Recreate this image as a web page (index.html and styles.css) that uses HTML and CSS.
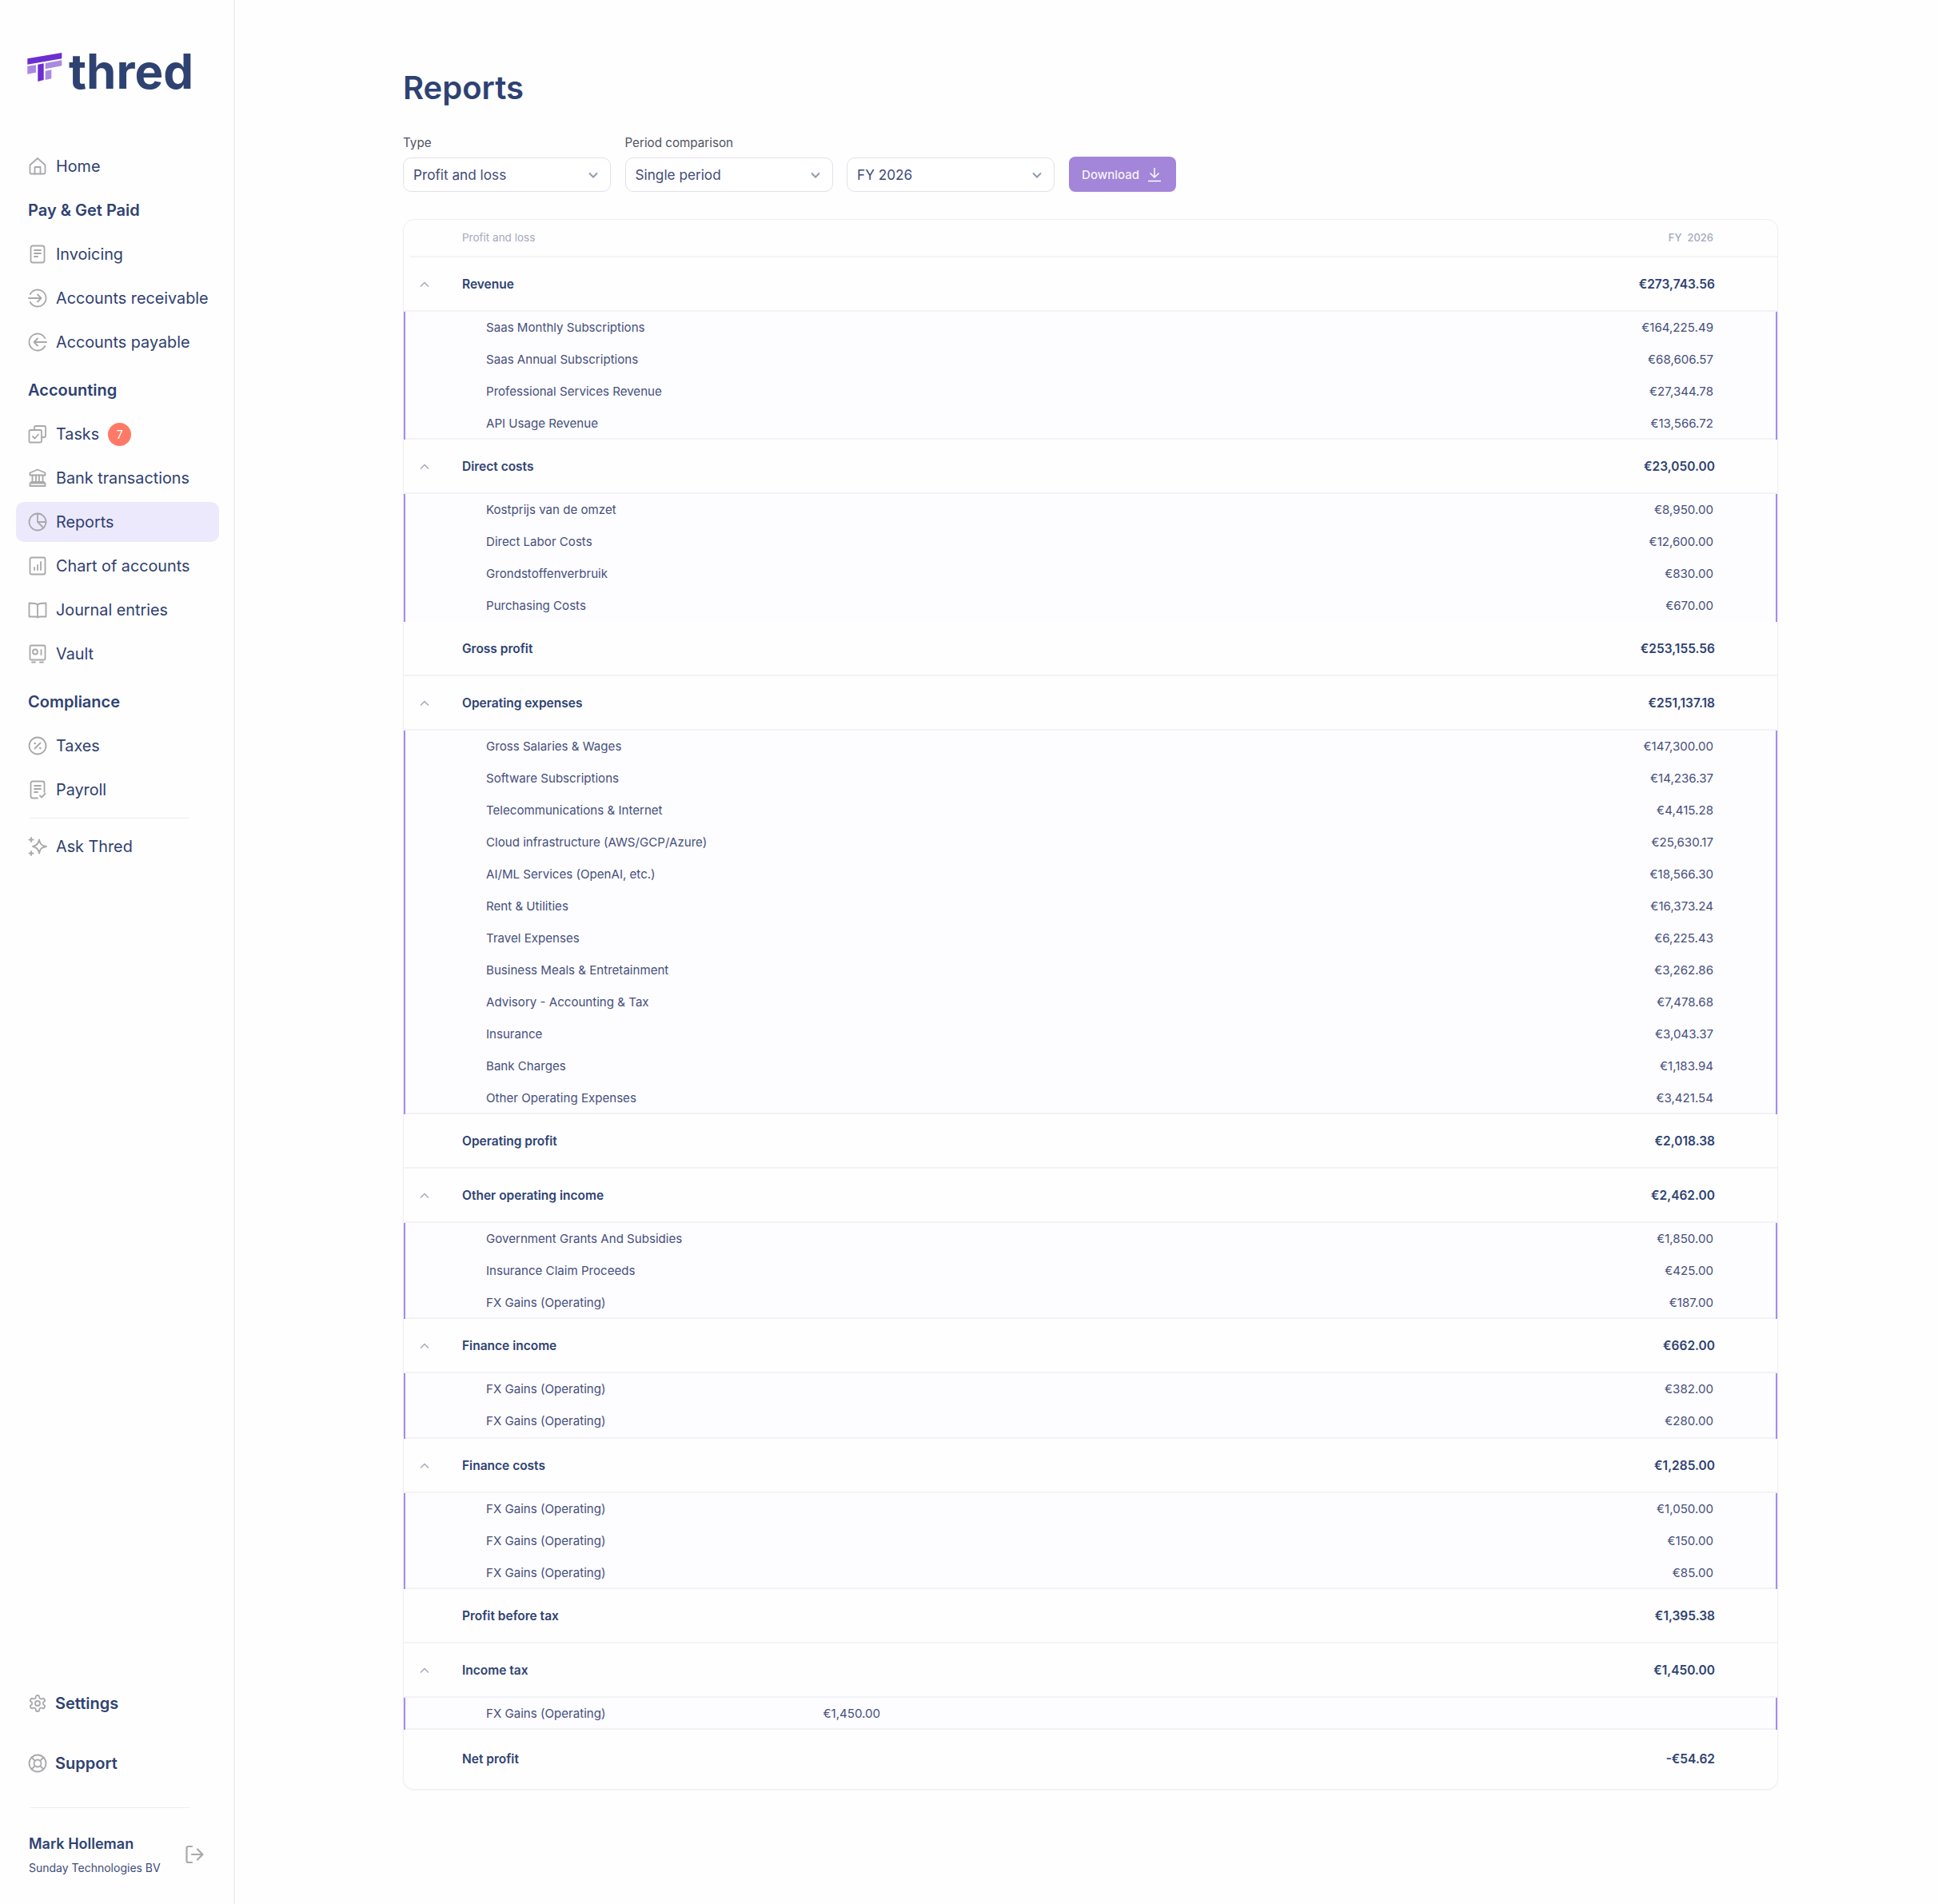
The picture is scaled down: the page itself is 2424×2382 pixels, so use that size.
FILE: index.html
```html
<!DOCTYPE html>
<html lang="en">
<head>
    <meta charset="UTF-8">
    <title>Reports</title>
    <link rel="stylesheet" href="styles.css">
</head>
<body>
    <aside class="sidebar">
        <div class="logo">
            <svg class="logo-mark" viewBox="0 0 44 38" xmlns="http://www.w3.org/2000/svg">
                <polygon class="mark-dark" points="0.3,8.3 43.3,1 43.3,8.3 0.3,15.7"/>
                <polygon class="mark-light" points="0.3,17.7 11,16.3 11,25.7 0.3,27.7"/>
                <polygon class="mark-dark" points="13.3,15.7 20.7,14.3 20.7,35 13.3,37"/>
                <polygon class="mark-light" points="22.7,14 43.3,10.3 43.3,17.3 22.7,21.3"/>
                <polygon class="mark-light" points="22.7,23.7 30.3,22.3 30.3,33.3 22.7,35"/>
            </svg>
            <span class="logo-text">thred</span>
        </div>

        <nav class="nav">
            <a class="nav-item">
                <svg class="nav-icon" viewBox="0 0 24 24"><path d="M2.500 10.500 12 2l9.500 8.500V20a1.500 1.500 0 0 1-1.500 1.500H4A1.500 1.500 0 0 1 2.500 20z"/><path d="M8.500 21.500V13h7v8.500"/></svg>
                Home
            </a>
            <div class="nav-title">Pay &amp; Get Paid</div>
            <a class="nav-item">
                <svg class="nav-icon" viewBox="0 0 24 24"><rect x="3.500" y="1.500" width="17" height="21" rx="2.500"/><path d="M8 7h8M8 11h8M8 15h4"/></svg>
                Invoicing
            </a>
            <a class="nav-item">
                <svg class="nav-icon" viewBox="0 0 24 24"><path d="M2.800 7a10.500 10.500 0 1 1 0 10"/><path d="M1 12h15.500M12 7.500l4.500 4.500-4.500 4.500"/></svg>
                Accounts receivable
            </a>
            <a class="nav-item">
                <svg class="nav-icon" viewBox="0 0 24 24"><path d="M21.200 7a10.500 10.500 0 1 0 0 10"/><path d="M23 12H7.500M12 7.500 7.500 12l4.500 4.500"/></svg>
                Accounts payable
            </a>

            <div class="nav-title nav-title-gap">Accounting</div>
            <a class="nav-item">
                <svg class="nav-icon" viewBox="0 0 24 24"><path d="M8 6.500V3.500A1.500 1.500 0 0 1 9.500 2h11A1.500 1.500 0 0 1 22 3.500v11a1.500 1.500 0 0 1-1.500 1.500H17"/><rect x="1.500" y="7" width="15.500" height="15.500" rx="1.500"/><path d="m6 15 2.500 2.500L13 12.500"/></svg>
                Tasks
                <span class="badge">7</span>
            </a>
            <a class="nav-item">
                <svg class="nav-icon" viewBox="0 0 24 24"><path d="M12 1.500 2.500 5.500V8.500h19V5.500z"/><path d="M5.500 8.500V17M10 8.500V17M14 8.500V17M18.500 8.500V17M4 17h16M2.500 22h19v-3.500h-19z"/></svg>
                Bank transactions
            </a>
            <a class="nav-item active">
                <svg class="nav-icon" viewBox="0 0 24 24"><circle cx="12" cy="12" r="10.500"/><path d="M12 1.500V12l7.500 7.500M12 12h10.500"/></svg>
                Reports
            </a>
            <a class="nav-item">
                <svg class="nav-icon" viewBox="0 0 24 24"><rect x="2.500" y="1.500" width="19" height="21" rx="2"/><path d="M8 17v-3M12 17v-6M16 17V7"/></svg>
                Chart of accounts
            </a>
            <a class="nav-item">
                <svg class="nav-icon" viewBox="0 0 24 24"><path d="M12 5.500C10.500 4 8 3.500 1.500 3.500V20.500h7.500c1.500 0 3 .5 3 1 0-.5 1.500-1 3-1h7.500V3.500c-6.500 0-9 .5-10.500 2zM12 5.500v16"/></svg>
                Journal entries
            </a>
            <a class="nav-item">
                <svg class="nav-icon" viewBox="0 0 24 24"><rect x="2.500" y="1.500" width="19" height="18" rx="1.500"/><circle cx="9" cy="9.500" r="3"/><path d="M16.500 7v6M5 22.500h4M15 22.500h4"/></svg>
                Vault
            </a>

            <div class="nav-title nav-title-gap">Compliance</div>
            <a class="nav-item">
                <svg class="nav-icon" viewBox="0 0 24 24"><circle cx="12" cy="12" r="10.500"/><path d="m8.500 15.500 7-7"/><path class="icon-dot" d="M8.700 9h.01M15.300 15h.01"/></svg>
                Taxes
            </a>
            <a class="nav-item">
                <svg class="nav-icon" viewBox="0 0 24 24"><path d="M12 22.500H6A2.500 2.500 0 0 1 3.500 20V4A2.500 2.500 0 0 1 6 1.500h12A2.500 2.500 0 0 1 20.500 4v11"/><path d="M8 7h8M8 11h8M8 15h4M15 19.500l2 2 4.500-4.500"/></svg>
                Payroll
            </a>
            <div class="nav-divider"></div>
            <a class="nav-item">
                <svg class="nav-icon" viewBox="0 0 24 24"><path d="M14 3.500c.8 5.300 3 7.500 9 8.500-6 1-8.200 3.200-9 8.500-.8-5.300-3-7.500-8-8.500 5-1 7.200-3.200 8-8.500z"/><path d="M4 1v5M1.500 3.500h5M4 18v5M1.500 20.500h5"/></svg>
                Ask Thred
            </a>
        </nav>

        <div class="sidebar-bottom">
            <a class="nav-item nav-strong">
                <svg class="nav-icon" viewBox="0 0 24 24"><path d="M12.220 2h-.44a2 2 0 0 0-2 2v.18a2 2 0 0 1-1 1.730l-.43.25a2 2 0 0 1-2 0l-.15-.08a2 2 0 0 0-2.730.73l-.22.38a2 2 0 0 0 .73 2.730l.15.1a2 2 0 0 1 1 1.720v.51a2 2 0 0 1-1 1.740l-.15.09a2 2 0 0 0-.73 2.730l.22.38a2 2 0 0 0 2.730.73l.15-.08a2 2 0 0 1 2 0l.43.25a2 2 0 0 1 1 1.730V20a2 2 0 0 0 2 2h.44a2 2 0 0 0 2-2v-.18a2 2 0 0 1 1-1.730l.43-.25a2 2 0 0 1 2 0l.15.08a2 2 0 0 0 2.730-.73l.22-.39a2 2 0 0 0-.73-2.730l-.15-.08a2 2 0 0 1-1-1.740v-.5a2 2 0 0 1 1-1.740l.15-.09a2 2 0 0 0 .73-2.730l-.22-.38a2 2 0 0 0-2.730-.73l-.15.08a2 2 0 0 1-2 0l-.43-.25a2 2 0 0 1-1-1.730V4a2 2 0 0 0-2-2z"/><circle cx="12" cy="12" r="3"/></svg>
                Settings
            </a>
            <a class="nav-item nav-strong support-item">
                <svg class="nav-icon" viewBox="0 0 24 24"><circle cx="12" cy="12" r="10.500"/><circle cx="12" cy="12" r="4.500"/><path d="m4.500 4.500 4.300 4.300M19.500 4.500l-4.300 4.300M4.500 19.500l4.300-4.300M19.500 19.500l-4.300-4.300"/></svg>
                Support
            </a>
            <div class="nav-divider bottom-divider"></div>
            <div class="user">
                <div>
                    <div class="user-name">Mark Holleman</div>
                    <div class="user-company">Sunday Technologies BV</div>
                </div>
                <svg class="logout-icon" viewBox="0 0 24 24"><path d="M9 2H4.500A2 2 0 0 0 2.500 4v16a2 2 0 0 0 2 2H9"/><path d="M9 12h13.500M16 5.500l6.500 6.500-6.500 6.500"/></svg>
            </div>
        </div>
    </aside>

    <main class="main">
        <h1>Reports</h1>

        <div class="filters">
            <div class="field">
                <label>Type</label>
                <div class="select">Profit and loss
                    <svg class="select-arrow" viewBox="0 0 12 8"><path d="M1 1.500 6 6.500l5-5"/></svg>
                </div>
            </div>
            <div class="field">
                <label>Period comparison</label>
                <div class="select">Single period
                    <svg class="select-arrow" viewBox="0 0 12 8"><path d="M1 1.500 6 6.500l5-5"/></svg>
                </div>
            </div>
            <div class="field">
                <div class="select">FY 2026
                    <svg class="select-arrow" viewBox="0 0 12 8"><path d="M1 1.500 6 6.500l5-5"/></svg>
                </div>
            </div>
            <button class="download">Download
                <svg class="download-icon" viewBox="0 0 20 20"><path d="M10 2v11.500M4.500 8.500 10 14l5.500-5.500M2 18.500h16"/></svg>
            </button>
        </div>

        <section class="report">
            <div class="report-head"><span>Profit and loss</span><span class="head-period">FY&nbsp; 2026</span></div>

            <div class="row group"><svg class="toggle" viewBox="0 0 12 8"><path d="M1 6.500 6 1.500l5 5"/></svg><span>Revenue</span><span>€273,743.56</span></div>
            <div class="children">
                <div class="row child"><span>Saas Monthly Subscriptions</span><span>€164,225.49</span></div>
                <div class="row child"><span>Saas Annual Subscriptions</span><span>€68,606.57</span></div>
                <div class="row child"><span>Professional Services Revenue</span><span>€27,344.78</span></div>
                <div class="row child"><span>API Usage Revenue</span><span>€13,566.72</span></div>
            </div>

            <div class="row group"><svg class="toggle" viewBox="0 0 12 8"><path d="M1 6.500 6 1.500l5 5"/></svg><span>Direct costs</span><span>€23,050.00</span></div>
            <div class="children no-line">
                <div class="row child"><span>Kostprijs van de omzet</span><span>€8,950.00</span></div>
                <div class="row child"><span>Direct Labor Costs</span><span>€12,600.00</span></div>
                <div class="row child"><span>Grondstoffenverbruik</span><span>€830.00</span></div>
                <div class="row child"><span>Purchasing Costs</span><span>€670.00</span></div>
            </div>

            <div class="row group total"><span>Gross profit</span><span>€253,155.56</span></div>

            <div class="row group"><svg class="toggle" viewBox="0 0 12 8"><path d="M1 6.500 6 1.500l5 5"/></svg><span>Operating expenses</span><span>€251,137.18</span></div>
            <div class="children">
                <div class="row child"><span>Gross Salaries &amp; Wages</span><span>€147,300.00</span></div>
                <div class="row child"><span>Software Subscriptions</span><span>€14,236.37</span></div>
                <div class="row child"><span>Telecommunications &amp; Internet</span><span>€4,415.28</span></div>
                <div class="row child"><span>Cloud infrastructure (AWS/GCP/Azure)</span><span>€25,630.17</span></div>
                <div class="row child"><span>AI/ML Services (OpenAI, etc.)</span><span>€18,566.30</span></div>
                <div class="row child"><span>Rent &amp; Utilities</span><span>€16,373.24</span></div>
                <div class="row child"><span>Travel Expenses</span><span>€6,225.43</span></div>
                <div class="row child"><span>Business Meals &amp; Entretainment</span><span>€3,262.86</span></div>
                <div class="row child"><span>Advisory - Accounting &amp; Tax</span><span>€7,478.68</span></div>
                <div class="row child"><span>Insurance</span><span>€3,043.37</span></div>
                <div class="row child"><span>Bank Charges</span><span>€1,183.94</span></div>
                <div class="row child"><span>Other Operating Expenses</span><span>€3,421.54</span></div>
            </div>

            <div class="row group total"><span>Operating profit</span><span>€2,018.38</span></div>

            <div class="row group"><svg class="toggle" viewBox="0 0 12 8"><path d="M1 6.500 6 1.500l5 5"/></svg><span>Other operating income</span><span>€2,462.00</span></div>
            <div class="children">
                <div class="row child"><span>Government Grants And Subsidies</span><span>€1,850.00</span></div>
                <div class="row child"><span>Insurance Claim Proceeds</span><span>€425.00</span></div>
                <div class="row child"><span>FX Gains (Operating)</span><span>€187.00</span></div>
            </div>

            <div class="row group"><svg class="toggle" viewBox="0 0 12 8"><path d="M1 6.500 6 1.500l5 5"/></svg><span>Finance income</span><span>€662.00</span></div>
            <div class="children children-tall">
                <div class="row child"><span>FX Gains (Operating)</span><span>€382.00</span></div>
                <div class="row child"><span>FX Gains (Operating)</span><span>€280.00</span></div>
            </div>

            <div class="row group"><svg class="toggle" viewBox="0 0 12 8"><path d="M1 6.500 6 1.500l5 5"/></svg><span>Finance costs</span><span>€1,285.00</span></div>
            <div class="children">
                <div class="row child"><span>FX Gains (Operating)</span><span>€1,050.00</span></div>
                <div class="row child"><span>FX Gains (Operating)</span><span>€150.00</span></div>
                <div class="row child"><span>FX Gains (Operating)</span><span>€85.00</span></div>
            </div>

            <div class="row group total"><span>Profit before tax</span><span>€1,395.38</span></div>

            <div class="row group"><svg class="toggle" viewBox="0 0 12 8"><path d="M1 6.500 6 1.500l5 5"/></svg><span>Income tax</span><span>€1,450.00</span></div>
            <div class="children">
                <div class="row child child-left"><span>FX Gains (Operating)</span><span>€1,450.00</span></div>
            </div>

            <div class="row group total net"><span>Net profit</span><span>-€54.62</span></div>
        </section>
    </main>
</body>
</html>
```

FILE: styles.css
```css
* {
    margin: 0;
    padding: 0;
    box-sizing: border-box;
}

body {
    font-family: Inter, 'Noto Sans', sans-serif;
    background-color: #fefefe;
    color: #2f4070;
    display: flex;
    height: 2382px;
    overflow: hidden;
}

/* Sidebar */
.sidebar {
    width: 294px;
    flex-shrink: 0;
    height: 100%;
    border-right: 2px solid #f1f1f3;
    padding: 0 18px 0 20px;
    display: flex;
    flex-direction: column;
}

.logo {
    height: 183px;
    padding: 61px 0 0 14px;
    display: flex;
    align-items: flex-start;
}

.logo-mark {
    width: 44px;
    height: 38px;
    margin-top: 4px;
}

.mark-dark {
    fill: #6b2fd0;
}

.mark-light {
    fill: #a989e3;
}

.logo-text {
    font-size: 60px;
    line-height: 56px;
    font-weight: 700;
    color: #2e4272;
    margin-left: 8px;
}

.nav {
    display: flex;
    flex-direction: column;
    gap: 5px;
}

.nav-item {
    height: 50px;
    display: flex;
    align-items: center;
    gap: 11px;
    padding-left: 15px;
    border-radius: 10px;
    font-size: 19.800px;
    color: #2f4070;
}

.nav-item.active {
    background-color: #ece9fd;
}

.nav-icon {
    width: 24px;
    height: 24px;
    flex-shrink: 0;
    fill: none;
    stroke: #a9a9ac;
    stroke-width: 1.800;
    stroke-linecap: round;
    stroke-linejoin: round;
}

.icon-dot {
    stroke-width: 2.600;
}

.nav-title {
    height: 50px;
    display: flex;
    align-items: center;
    padding-left: 15px;
    font-size: 20px;
    font-weight: 600;
    color: #2e4272;
}

.nav-title-gap {
    margin-top: 5px;
}

.nav-divider {
    height: 1px;
    background-color: #eeeef0;
    margin: 5px 37px 5px 17px;
}

.badge {
    width: 29px;
    height: 29px;
    border-radius: 50%;
    background-color: #ff7a66;
    color: #fff;
    font-size: 14px;
    display: flex;
    align-items: center;
    justify-content: center;
}

.sidebar-bottom {
    margin-top: auto;
    padding-bottom: 30px;
    display: flex;
    flex-direction: column;
}

.nav-strong {
    font-size: 20px;
    font-weight: 600;
    color: #2e4272;
    gap: 10px;
}

.support-item {
    margin-top: 25px;
}

.bottom-divider {
    margin-top: 30px;
    margin-bottom: 30px;
}

.user {
    display: flex;
    align-items: center;
    padding: 0 0 0 16px;
}

.user-name {
    font-size: 18px;
    font-weight: 600;
    line-height: 30px;
    color: #2e4272;
}

.user-company {
    font-size: 14px;
    line-height: 30px;
    color: #3f4c7a;
}

.logout-icon {
    width: 24px;
    height: 24px;
    margin-left: 30px;
    margin-top: -4px;
    fill: none;
    stroke: #a9a9ac;
    stroke-width: 2.200;
    stroke-linecap: round;
    stroke-linejoin: round;
}

/* Main */
.main {
    flex: 1;
    padding: 85px 200px 0 210px;
}

h1 {
    font-size: 40px;
    font-weight: 600;
    line-height: 50px;
    color: #2e4272;
}

.filters {
    display: flex;
    align-items: flex-end;
    gap: 17.500px;
    margin-top: 32px;
}

.field label {
    display: block;
    font-size: 15.200px;
    line-height: 24px;
    margin-bottom: 6px;
    color: #505462;
}

.select {
    width: 260px;
    height: 43px;
    background-color: #fff;
    border: 1.500px solid #e2e1e8;
    border-radius: 10px;
    padding: 0 12px;
    display: flex;
    align-items: center;
    justify-content: space-between;
    font-size: 17.200px;
    color: #3f4c7a;
}

.select-arrow {
    width: 12px;
    height: 8px;
    margin-right: 3px;
    fill: none;
    stroke: #8f9bae;
    stroke-width: 2;
}

.download {
    width: 134px;
    height: 44px;
    border: none;
    border-radius: 8px;
    background-color: #a385d9;
    color: #f6f2fc;
    font-family: inherit;
    font-size: 15px;
    font-weight: 500;
    display: flex;
    align-items: center;
    justify-content: center;
    gap: 9px;
}

.download-icon {
    width: 20px;
    height: 20px;
    fill: none;
    stroke: #fff;
    stroke-width: 1.500;
}

/* Report table */
.report {
    margin-top: 34px;
    border: 1.500px solid #f0eff4;
    border-radius: 14px;
    box-shadow: 0 1px 2px rgba(40, 40, 70, 0.06);
    overflow: hidden;
}

.report-head {
    height: 47px;
    margin-left: 8px;
    padding: 0 80px 2px 65px;
    border-bottom: 2px solid #f4f4f6;
    display: flex;
    align-items: center;
    justify-content: space-between;
    font-size: 13.500px;
    color: #a4a9c0;
}

.head-period {
    font-size: 13px;
    font-weight: 500;
}

.row {
    position: relative;
    display: flex;
    align-items: center;
    justify-content: space-between;
    padding-right: 78px;
}

.group {
    height: 68px;
    padding-left: 73px;
    border-bottom: 2px solid #f3f2f6;
    font-size: 15.500px;
    font-weight: 600;
    color: #2e4272;
}

.toggle {
    position: absolute;
    left: 20px;
    top: 30px;
    width: 12px;
    height: 8px;
    fill: none;
    stroke: #a4a9ba;
    stroke-width: 1.500;
}

.children {
    background-color: #fdfcff;
    border-left: 2.500px solid #a78bf0;
    border-right: 2.500px solid #a78bf0;
    box-shadow: inset 0 -2px 0 #f3f2f6;
}

.children.no-line {
    box-shadow: none;
}

.children-tall {
    padding-bottom: 2px;
}

.child {
    height: 40px;
    padding: 0 78px 1px 101px;
    font-size: 15.100px;
    color: #45507c;
}

.child-left {
    justify-content: flex-start;
}

.child-left span:last-child {
    margin-left: 272px;
}

.net {
    height: 74px;
    padding-bottom: 2px;
    border-bottom: none;
}
```
